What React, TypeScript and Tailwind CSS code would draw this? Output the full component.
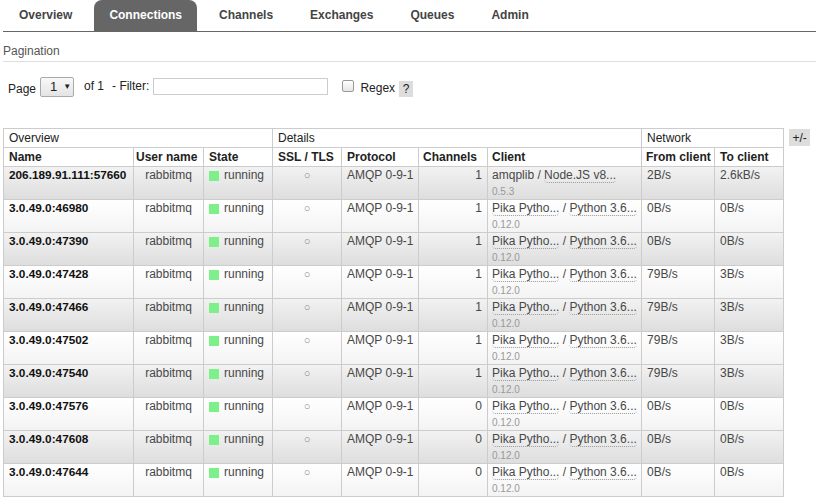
import React from 'react';

type Conn = {
  name: string;
  channels: number;
  client: string;
  clientTrunc: boolean;
  platform: string;
  version: string;
  from: string;
  to: string;
};

const pika = { client: 'Pika Pytho...', clientTrunc: true, platform: 'Python 3.6...', version: '0.12.0' };

const conns: Conn[] = [
  { name: '206.189.91.111:57660', channels: 1, client: 'amqplib', clientTrunc: false, platform: 'Node.JS v8...', version: '0.5.3', from: '2B/s', to: '2.6kB/s' },
  { name: '3.0.49.0:46980', channels: 1, ...pika, from: '0B/s', to: '0B/s' },
  { name: '3.0.49.0:47390', channels: 1, ...pika, from: '0B/s', to: '0B/s' },
  { name: '3.0.49.0:47428', channels: 1, ...pika, from: '79B/s', to: '3B/s' },
  { name: '3.0.49.0:47466', channels: 1, ...pika, from: '79B/s', to: '3B/s' },
  { name: '3.0.49.0:47502', channels: 1, ...pika, from: '79B/s', to: '3B/s' },
  { name: '3.0.49.0:47540', channels: 1, ...pika, from: '79B/s', to: '3B/s' },
  { name: '3.0.49.0:47576', channels: 0, ...pika, from: '0B/s', to: '0B/s' },
  { name: '3.0.49.0:47608', channels: 0, ...pika, from: '0B/s', to: '0B/s' },
  { name: '3.0.49.0:47644', channels: 0, ...pika, from: '0B/s', to: '0B/s' },
];

const tabs = ['Overview', 'Connections', 'Channels', 'Exchanges', 'Queues', 'Admin'];

function Abbr({ children }: { children: React.ReactNode }) {
  return (
    <span className="inline-block leading-[13px] border-b border-dotted border-[#999] rounded-b-[4px]">
      {children}
    </span>
  );
}

function Row({ c, odd }: { c: Conn; odd: boolean }) {
  const bg = odd
    ? 'bg-gradient-to-b from-[#f2f2f2] to-[#dddddd]'
    : 'bg-gradient-to-b from-[#ffffff] to-[#f3f3f3]';
  const td = 'border border-[#ccc] align-top pt-[1px] h-[33px] leading-[15px] whitespace-nowrap overflow-hidden';
  return (
    <tr className={bg}>
      <td className={`${td} px-[5px] font-bold text-[11.8px] text-[#111]`}>{c.name}</td>
      <td className={`${td} text-center`}>rabbitmq</td>
      <td className={`${td} px-[5px]`}>
        <span className="inline-block w-[10px] h-[10px] bg-[#7ef08a] mr-[5px] align-[-2px]" />
        running
      </td>
      <td className={`${td} text-center text-[11px] text-[#888] pt-[1px]`}>○</td>
      <td className={`${td} px-[5px]`}>AMQP 0-9-1</td>
      <td className={`${td} px-[5px] text-right`}>{c.channels}</td>
      <td className={`${td} pl-[4px]`}>
        <div className="leading-[15px]">
          {c.clientTrunc ? <Abbr>{c.client}</Abbr> : c.client} / <Abbr>{c.platform}</Abbr>
        </div>
        <div className="text-[10px] leading-[13px] mt-[2px] text-[#999]">{c.version}</div>
      </td>
      <td className={`${td} px-[5px]`}>{c.from}</td>
      <td className={`${td} px-[5px]`}>{c.to}</td>
    </tr>
  );
}

export default function App() {
  return (
    <div className="w-[816px] h-[497px] overflow-hidden bg-white text-[12px] text-[#484848] font-['Liberation_Sans',Arial,sans-serif]">
      <nav className="ml-[3px] flex h-[32px] border-b border-[#666] pl-[1px]">
        {tabs.map((t) => (
          <div
            key={t}
            className={`flex items-center h-[31px] pb-[2px] px-[15px] mr-[7px] rounded-t-[8px] font-bold text-[12px] ${
              t === 'Connections' ? 'bg-[#666] text-white' : 'text-[#444]'
            }`}
          >
            {t}
          </div>
        ))}
      </nav>

      <div className="ml-[3px] mt-[11px] h-[19px] border-b border-[#ddd] text-[12px] text-[#555] leading-[16px]">
        Pagination
      </div>

      <div className="flex items-center h-[20px] mt-[15px] ml-[8px] text-[12px] text-[#222]">
        <span className="mt-[3px]">Page</span>
        <div className="ml-[4px] flex items-center gap-[6px] h-[20px] w-[34px] pl-[9px] border border-[#aaa] rounded-[2px] bg-gradient-to-b from-[#f8f8f8] to-[#e4e4e4] text-[13px]">
          1<span className="text-[8px]">▼</span>
        </div>
        <span className="ml-[10px] -mt-[3px]">of 1</span>
        <span className="ml-[8px] -mt-[3px]">- Filter:</span>
        <div className="ml-[4px] w-[175px] h-[17px] border border-[#ccc] bg-white -mt-[1px]" />
        <div className="ml-[14px] w-[12px] h-[12px] border border-[#999] rounded-[2px] bg-gradient-to-b from-white to-[#e6e6e6] -mt-[3px]" />
        <span className="ml-[6px] mt-[2px]">Regex</span>
        <span className="ml-[4px] w-[14px] h-[16px] bg-[#ddd] flex items-center justify-center mt-[3px]">?</span>
      </div>

      <div className="flex items-start mt-[31px] ml-[3px]">
        <table className="table-fixed border-collapse w-[780px]">
          <colgroup>
            <col className="w-[130px]" />
            <col className="w-[70px]" />
            <col className="w-[69px]" />
            <col className="w-[69px]" />
            <col className="w-[77px]" />
            <col className="w-[69px]" />
            <col className="w-[154px]" />
            <col className="w-[73px]" />
            <col className="w-[69px]" />
          </colgroup>
          <thead className="text-[#222]">
            <tr className="h-[19px]">
              <th colSpan={3} className="border border-[#ccc] px-[5px] text-left font-normal">Overview</th>
              <th colSpan={4} className="border border-[#ccc] px-[5px] text-left font-normal">Details</th>
              <th colSpan={2} className="border border-[#ccc] px-[5px] text-left font-normal">Network</th>
            </tr>
            <tr className="h-[19px] whitespace-nowrap">
              <th className="border border-[#ccc] px-[5px] text-left">Name</th>
              <th className="border border-[#ccc] px-[2px] text-left">User name</th>
              <th className="border border-[#ccc] px-[5px] text-left">State</th>
              <th className="border border-[#ccc] px-[5px] text-left">SSL / TLS</th>
              <th className="border border-[#ccc] px-[5px] text-left">Protocol</th>
              <th className="border border-[#ccc] px-[4px] text-left">Channels</th>
              <th className="border border-[#ccc] px-[4px] text-left">Client</th>
              <th className="border border-[#ccc] px-[4px] text-left">From client</th>
              <th className="border border-[#ccc] px-[5px] text-left">To client</th>
            </tr>
          </thead>
          <tbody>
            {conns.map((c, i) => (
              <Row key={c.name} c={c} odd={i % 2 === 0} />
            ))}
          </tbody>
        </table>
        <div className="ml-[5px] mt-[1px] w-[21px] h-[17px] bg-[#ddd] text-[#222] text-[12px] flex items-center justify-center">
          +/-
        </div>
      </div>
    </div>
  );
}
